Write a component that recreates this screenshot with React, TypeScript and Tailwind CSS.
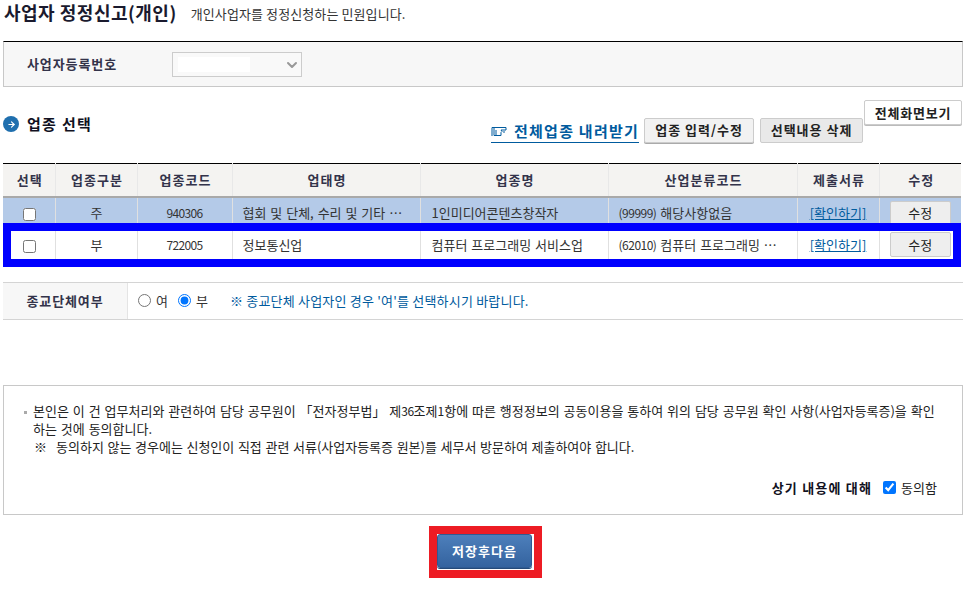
import React from 'react';
import { ChevronDown, ArrowRight } from 'lucide-react';

const font = { fontFamily: '"Noto Sans CJK KR", "Liberation Sans", sans-serif' };

const rows = [
  {
    kind: '주',
    code: '940306',
    biz: '협회 및 단체, 수리 및 기타 …',
    item: '1인미디어콘텐츠창작자',
    clsCode: '(99999)',
    cls: '해당사항없음',
    selected: true,
  },
  {
    kind: '부',
    code: '722005',
    biz: '정보통신업',
    item: '컴퓨터 프로그래밍 서비스업',
    clsCode: '(62010)',
    cls: '컴퓨터 프로그래밍 …',
    selected: false,
  },
];

const headers = ['선택', '업종구분', '업종코드', '업태명', '업종명', '산업분류코드', '제출서류', '수정'];
const widths = ['w-[52px]', 'w-[82px]', 'w-[95px]', 'w-[188px]', 'w-[188px]', 'w-[189px]', 'w-[82px]', 'w-[82px]'];

const GrayButton = ({ children, className = '' }: { children: React.ReactNode; className?: string }) => (
  <button className={`border border-[#cccccc] rounded-[2px] text-[13px] font-bold text-[#222222] ${className}`}>
    {children}
  </button>
);

export default function App() {
  return (
    <div style={font} className="w-[968px] h-[603px] bg-white overflow-hidden text-[#333333] pl-[3px] pr-[5px]">
      {/* Title */}
      <div className="flex items-center h-[24px] pl-[1px]">
        <h1 className="text-[18px] leading-[24px] font-bold text-[#1a1a2e] tracking-[0.5px]">사업자 정정신고(개인)</h1>
        <p className="ml-[14px] text-[13px] leading-[24px] tracking-[0.1px] text-[#333333] mt-[3px]">개인사업자를 정정신청하는 민원입니다.</p>
      </div>

      {/* Registration number */}
      <div className="mt-[17px] h-[46px] border border-[#c8c8c8] border-t-black bg-[#f7f7f7] flex items-center">
        <span className="ml-[23px] w-[145px] text-[13px] tracking-[0.9px] font-bold text-[#33334a]">사업자등록번호</span>
        <div className="w-[130px] h-[25px] border border-[#cccccc] bg-[#f9f9f9] flex items-center relative">
          <div className="ml-[5px] w-[72px] h-[15px] bg-white" />
          <ChevronDown size={16} strokeWidth={3} className="absolute right-[1px] top-[4px] text-[#999999]" />
        </div>
      </div>

      {/* Section header */}
      <div className="relative h-[76px]">
        <div className="flex items-center pt-[27px]">
          <span className="w-[16px] h-[16px] rounded-full bg-[#1f6fae] flex items-center justify-center">
            <ArrowRight size={9} strokeWidth={3} className="text-white" />
          </span>
          <h2 className="ml-[8px] text-[15px] leading-[20px] tracking-[1.3px] font-bold text-[#111122]">업종 선택</h2>
        </div>
        <div className="absolute left-[488px] top-[30px] flex items-center">
          <a className="flex items-center h-[22px] mt-[4px] border-b border-b-[#005b9e] text-[15px] tracking-[1.25px] font-bold text-[#005b9e]">
            <svg width="16" height="10" viewBox="0 0 16 10" className="mr-[7px]" fill="none" stroke="#005b9e" strokeWidth="1">
              <path d="M1 .5h14v2.500h-5l1 1.500-1 1v3H3V.500" />
              <path d="M1 .5v8.500M5 3v6M12 5h2" />
            </svg>
            전체업종 내려받기
          </a>
          <GrayButton className="ml-[5px] w-[110px] h-[25px] tracking-[1px] bg-[#f2f2f2] shadow-[0_1px_0_#aaaaaa]">업종 입력/수정</GrayButton>
          <GrayButton className="ml-[6px] w-[103px] h-[25px] tracking-[1px] bg-[#e9e9e9]">선택내용 삭제</GrayButton>
        </div>
        <GrayButton className="absolute left-[861px] top-[13px] w-[98px] h-[25px] tracking-[0.8px] bg-white shadow-[0_1px_0_#bbbbbb]">
          전체화면보기
        </GrayButton>
      </div>

      {/* Industry table */}
      <div className="relative">
        <table className="table-fixed border-collapse w-[958px] border-t border-t-black">
          <thead>
            <tr className="h-[33px] bg-[#f4f3f1] border-b-2 border-b-[#a9a9a9]">
              {headers.map((h, i) => (
                <th
                  key={h}
                  className={`${widths[i]} p-0 pl-[2px] text-[13px] tracking-[1px] font-bold text-[#33334a] border-r border-r-[#e8e8e8] last:border-r-0`}
                >
                  {h}
                </th>
              ))}
            </tr>
          </thead>
          <tbody>
            {rows.map((r) => (
              <tr key={r.code} className={`h-[32px] text-[13px] [word-spacing:1px] text-[#333333] ${r.selected ? 'bg-[#b4cae8]' : 'bg-white'}`}>
                <td className="p-0 pl-[1px] text-center border-r border-r-[#e0e0e0]">
                  <input type="checkbox" className="align-middle w-[13px] h-[13px]" />
                </td>
                <td className="p-0 pl-[1px] text-center border-r border-r-[#e0e0e0]">{r.kind}</td>
                <td className="p-0 text-center text-[12px] tracking-[-0.7px] border-r border-r-[#e0e0e0]">{r.code}</td>
                <td className="p-0 pl-[10px] whitespace-nowrap border-r border-r-[#e0e0e0]">{r.biz}</td>
                <td className="p-0 pl-[11px] whitespace-nowrap border-r border-r-[#e0e0e0]">{r.item}</td>
                <td className="p-0 pl-[10px] whitespace-nowrap border-r border-r-[#e0e0e0]">
                  <span className="text-[12px] tracking-[-0.5px]">{r.clsCode}</span> {r.cls}
                </td>
                <td className="p-0 text-center border-r border-r-[#e0e0e0]">
                  <a className="text-[#005b9e] underline">[확인하기]</a>
                </td>
                <td className="p-0 text-center">
                  <button className="w-[61px] h-[25px] border border-[#cccccc] rounded-[2px] bg-[#eeeeee] text-[13px] text-[#222222]">
                    수정
                  </button>
                </td>
              </tr>
            ))}
          </tbody>
        </table>
        {/* Blue annotation box */}
        <div className="absolute left-0 top-[60px] w-[958px] h-[44px] border-[8px] border-[#0000ff]" />
      </div>

      {/* Religious org row */}
      <div className="mt-[21px] h-[38px] border-y border-y-[#d4d4d4] flex items-center w-[960px]">
        <div className="w-[125px] h-full bg-[#f7f7f7] border-r border-r-[#e4e4e4] flex items-center justify-center text-[13px] tracking-[0.9px] font-bold text-[#33334a]">
          종교단체여부
        </div>
        <label className="ml-[10px] flex items-center text-[13px]">
          <input type="radio" name="religion" className="m-0 w-[13px] h-[13px]" />
          <span className="ml-[5px]">여</span>
        </label>
        <label className="ml-[10px] flex items-center text-[13px]">
          <input type="radio" name="religion" defaultChecked className="m-0 w-[13px] h-[13px]" />
          <span className="ml-[5px]">부</span>
        </label>
        <p className="ml-[22px] text-[13px] tracking-[0.2px] text-[#005b9e]">※ 종교단체 사업자인 경우 '여'를 선택하시기 바랍니다.</p>
      </div>

      {/* Consent box */}
      <div className="mt-[65px] h-[130px] w-[960px] border border-[#c8c8c8] pt-[16px] pl-[20px] pr-[25px] text-[13px] leading-[18px] text-[#222222] flex flex-col">
        <p className="relative pl-[9px] whitespace-nowrap [word-spacing:1px]">
          <span className="absolute left-0 top-[9px] w-[3px] h-[3px] bg-[#aaaaaa]" />
          본인은 이 건 업무처리와 관련하여 담당 공무원이 「전자정부법」 제<span className="text-[12px] tracking-[-0.5px]">36</span>조제<span className="text-[12px]">1</span>항에 따른 행정정보의 공동이용을 통하여 위의 담당 공무원 확인 사항(사업자등록증)을 확인
          <br />
          하는 것에 동의합니다.
        </p>
        <p className="pl-[10px] [word-spacing:0.7px]">
          ※<span className="ml-[9px]">동의하지 않는 경우에는 신청인이 직접 관련 서류(사업자등록증 원본)를 세무서 방문하여 제출하여야 합니다.</span>
        </p>
        <div className="mt-[23px] flex items-center justify-end">
          <span className="font-bold tracking-[1.2px] text-[#111122]">상기 내용에 대해</span>
          <input type="checkbox" defaultChecked className="ml-[11px] m-0 w-[13px] h-[13px]" />
          <span className="ml-[5px]">동의함</span>
        </div>
      </div>

      {/* Save */}
      <div className="mt-[11px] flex justify-center pl-[5px]">
        <div className="border-[8px] border-[#ed1c24] w-[113px] h-[52px]">
          <button className="w-[95px] h-[34px] rounded-[3px] bg-gradient-to-b from-[#4d7fbb] to-[#34639f] border border-[#2f5a92] shadow-[0_1px_0_#244a7a] text-white text-[13px] tracking-[1px] font-bold">
            저장후다음
          </button>
        </div>
      </div>
    </div>
  );
}
